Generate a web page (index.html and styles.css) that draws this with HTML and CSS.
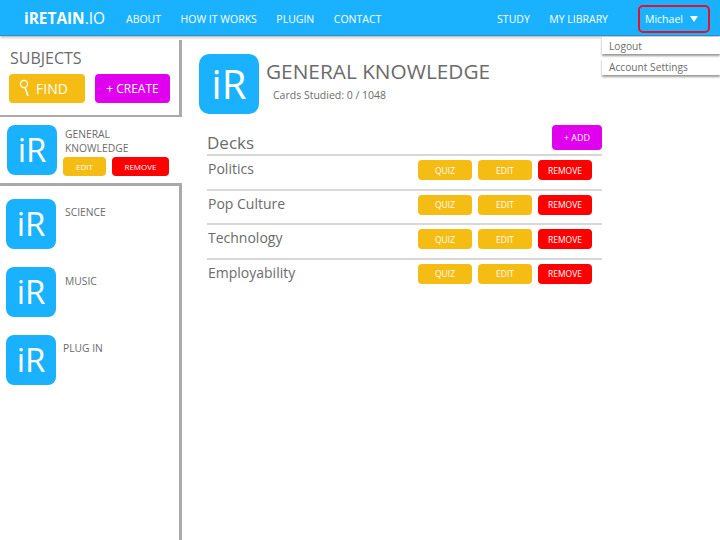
FILE: index.html
```html
<!DOCTYPE html>
<html lang="en">
<head>
	<meta charset="UTF-8">
	<title>iRetain.io</title>
	<link rel="stylesheet" href="styles.css">
</head>
<body>
	<header class="topbar">
		<div class="brand"><b>iRETAIN</b>.IO</div>
		<nav class="nav">
			<a>ABOUT</a>
			<a>HOW IT WORKS</a>
			<a>PLUGIN</a>
			<a>CONTACT</a>
		</nav>
		<nav class="nav nav-right">
			<a>STUDY</a>
			<a>MY LIBRARY</a>
		</nav>
		<div class="user">Michael <span class="arrow"></span></div>
	</header>

	<!-- dropdown hangs over the page -->
	<div class="menu">
		<div class="menu-item">Logout</div>
		<div class="menu-item">Account Settings</div>
	</div>

	<div class="page">
		<aside class="side">
			<div class="subjects">
				<h2>SUBJECTS</h2>
				<div class="subject-btns">
					<button class="btn btn-find">
						<svg width="11" height="20" viewBox="0 0 11 20"><circle cx="5" cy="5" r="3.6" fill="none" stroke="#fff" stroke-width="1.2"/><path d="M6 8.5 L9 17" stroke="#fff" stroke-width="1.6" fill="none"/></svg>
						FIND
					</button>
					<button class="btn btn-create">+ CREATE</button>
				</div>
			</div>
			<div class="active-item">
				<div class="logo">iR</div>
				<div class="active-body">
					<div class="item-name">GENERAL<br>KNOWLEDGE</div>
					<div class="active-btns">
						<button class="btn btn-edit">EDIT</button>
						<button class="btn btn-remove">REMOVE</button>
					</div>
				</div>
			</div>
			<div class="list">
				<div class="list-item"><div class="logo">iR</div><div class="item-name">SCIENCE</div></div>
				<div class="list-item"><div class="logo">iR</div><div class="item-name music">MUSIC</div></div>
				<div class="list-item"><div class="logo">iR</div><div class="item-name plug">PLUG IN</div></div>
			</div>
		</aside>

		<main class="main">
			<div class="head">
				<div class="logo logo-big">iR</div>
				<div>
					<h1>GENERAL KNOWLEDGE</h1>
					<p class="studied">Cards Studied: 0 / 1048</p>
				</div>
			</div>
			<div class="decks">
				<div class="decks-head">
					<h3>Decks</h3>
					<button class="btn btn-add">+ ADD</button>
				</div>
				<div class="deck">
					<span class="deck-name">Politics</span>
					<button class="btn btn-quiz">QUIZ</button>
					<button class="btn btn-quiz">EDIT</button>
					<button class="btn btn-del">REMOVE</button>
				</div>
				<div class="deck">
					<span class="deck-name">Pop Culture</span>
					<button class="btn btn-quiz">QUIZ</button>
					<button class="btn btn-quiz">EDIT</button>
					<button class="btn btn-del">REMOVE</button>
				</div>
				<div class="deck">
					<span class="deck-name">Technology</span>
					<button class="btn btn-quiz">QUIZ</button>
					<button class="btn btn-quiz">EDIT</button>
					<button class="btn btn-del">REMOVE</button>
				</div>
				<div class="deck">
					<span class="deck-name">Employability</span>
					<button class="btn btn-quiz">QUIZ</button>
					<button class="btn btn-quiz">EDIT</button>
					<button class="btn btn-del">REMOVE</button>
				</div>
			</div>
		</main>
	</div>
</body>
</html>
```

FILE: styles.css
```css
* {
	padding: 0;
	margin: 0;
	box-sizing: border-box;
}
html, body {
	height: 540px;
	overflow: hidden;
}
body {
	background: #fff;
	color: #6b6b6b;
	font-family: "Open Sans", "Liberation Sans", sans-serif;
	position: relative;
}
.topbar {
	height: 36px;
	background: #1ab2ff;
	border-bottom: 1px solid #2b8fc8;
	box-shadow: 0 1px 3px rgba(0,0,0,.35);
	display: flex;
	align-items: center;
	color: #fff;
	padding: 2px 0 0 24px;
	position: relative;
}
.brand {
	font-size: 15.4px;
	width: 102px;
}
.nav {
	display: flex;
	gap: 19.5px;
	font-size: 10.5px;
}
.nav-right {
	margin-left: auto;
	margin-right: 30px;
}
.user {
	width: 72px;
	height: 28px;
	margin: 1px 10px 0 0;
	border: 2px solid #e8112d;
	border-radius: 5px;
	font-size: 10.5px;
	display: flex;
	align-items: center;
	padding-left: 5px;
	gap: 7px;
}
.arrow {
	border-left: 4px solid transparent;
	border-right: 4px solid transparent;
	border-top: 6px solid #fff;
}
.menu {
	position: absolute;
	left: 602px;
	top: 37px;
	width: 118px;
}
.menu-item {
	height: 17px;
	margin-bottom: 4px;
	padding-left: 7px;
	font-size: 10.2px;
	line-height: 19px;
	background: #fff;
	box-shadow: 0 2px 2px rgba(0,0,0,.4);
}
.page {
	display: flex;
	height: 504px;
}
.side {
	width: 182px;
	flex: none;
	display: flex;
	flex-direction: column;
}
.subjects {
	height: 77px;
	margin-top: 4px;
	padding: 7px 0 0 9px;
	border-right: 3px solid #aaa;
	border-bottom: 2px solid #aaa;
}
.subjects h2 {
	font-size: 16px;
	font-weight: normal;
	line-height: 22px;
	margin-left: 1px;
}
.subject-btns {
	display: flex;
	gap: 10px;
	margin-top: 5px;
}
.btn {
	border: 0;
	border-radius: 4px;
	color: #fff;
	font-family: inherit;
	display: flex;
	align-items: center;
	justify-content: center;
}
.btn-find, .btn-create {
	width: 75px;
	height: 29px;
}
.btn-find {
	width: 76px;
	background: #f5bc13;
	font-size: 14px;
	gap: 6px;
	justify-content: flex-start;
	padding-left: 10px;
}
.btn-create {
	background: #e100ee;
	font-size: 12px;
}
.logo {
	width: 50px;
	height: 50px;
	flex: none;
	background: #1ab2ff;
	border-radius: 8px;
	color: #fff;
	font-size: 33px;
	line-height: 50px;
	text-align: center;
}
.logo-big {
	width: 60px;
	height: 60px;
	border-radius: 10px;
	font-size: 40px;
	line-height: 60px;
}
.active-item {
	height: 66px;
	padding: 8px 0 0 7px;
	display: flex;
	gap: 6px;
}
.item-name {
	font-size: 10.3px;
	line-height: 14px;
	padding-left: 2px;
}
.active-body {
	padding-top: 2px;
}
.active-btns {
	display: flex;
	gap: 6px;
	margin-top: 2px;
}
.btn-edit, .btn-remove {
	height: 19px;
	font-size: 8px;
}
.btn-edit {
	width: 43px;
	background: #f5bc13;
}
.btn-remove {
	width: 57px;
	background: #ff0000;
}
.list {
	flex: 1;
	border-top: 3px solid #aaa;
	border-right: 3px solid #aaa;
	padding: 13px 0 0 6px;
	display: flex;
	flex-direction: column;
	gap: 18px;
}
.list-item {
	display: flex;
	gap: 7px;
}
.list-item .item-name {
	padding-top: 6px;
}
.list-item .music {
	padding-top: 7px;
}
.list-item .plug {
	padding: 6px 0 0;
}
.main {
	flex: 1;
	padding: 18px 0 0 17px;
}
.head {
	display: flex;
	gap: 7px;
}
.head h1 {
	font-size: 20.8px;
	font-weight: normal;
	line-height: 28px;
	margin-top: 3px;
}
.studied {
	font-size: 10.5px;
	line-height: 14px;
	margin: 3px 0 0 7px;
}
.decks {
	width: 395px;
	margin: 11px 0 0 8px;
}
.decks-head {
	height: 31px;
	display: flex;
	justify-content: space-between;
	border-bottom: 2px solid #d8d8d8;
}
.decks-head h3 {
	font-size: 17px;
	font-weight: normal;
	line-height: 22px;
	margin-top: 7px;
}
.btn-add {
	width: 50px;
	height: 25px;
	background: #e100ee;
	font-size: 9px;
}
.deck {
	height: 34.6px;
	display: flex;
	gap: 6px;
	align-items: flex-start;
	padding: 3px 10px 0 1px;
	border-bottom: 2px solid #d8d8d8;
}
.deck:last-child {
	border-bottom: 0;
}
.deck-name {
	flex: 1;
	font-size: 14px;
	line-height: 20px;
}
.btn-quiz, .btn-del {
	width: 54px;
	height: 20px;
	font-size: 8.5px;
	margin-top: 1px;
}
.btn-quiz {
	background: #f5bc13;
}
.btn-del {
	background: #ff0000;
}
```
